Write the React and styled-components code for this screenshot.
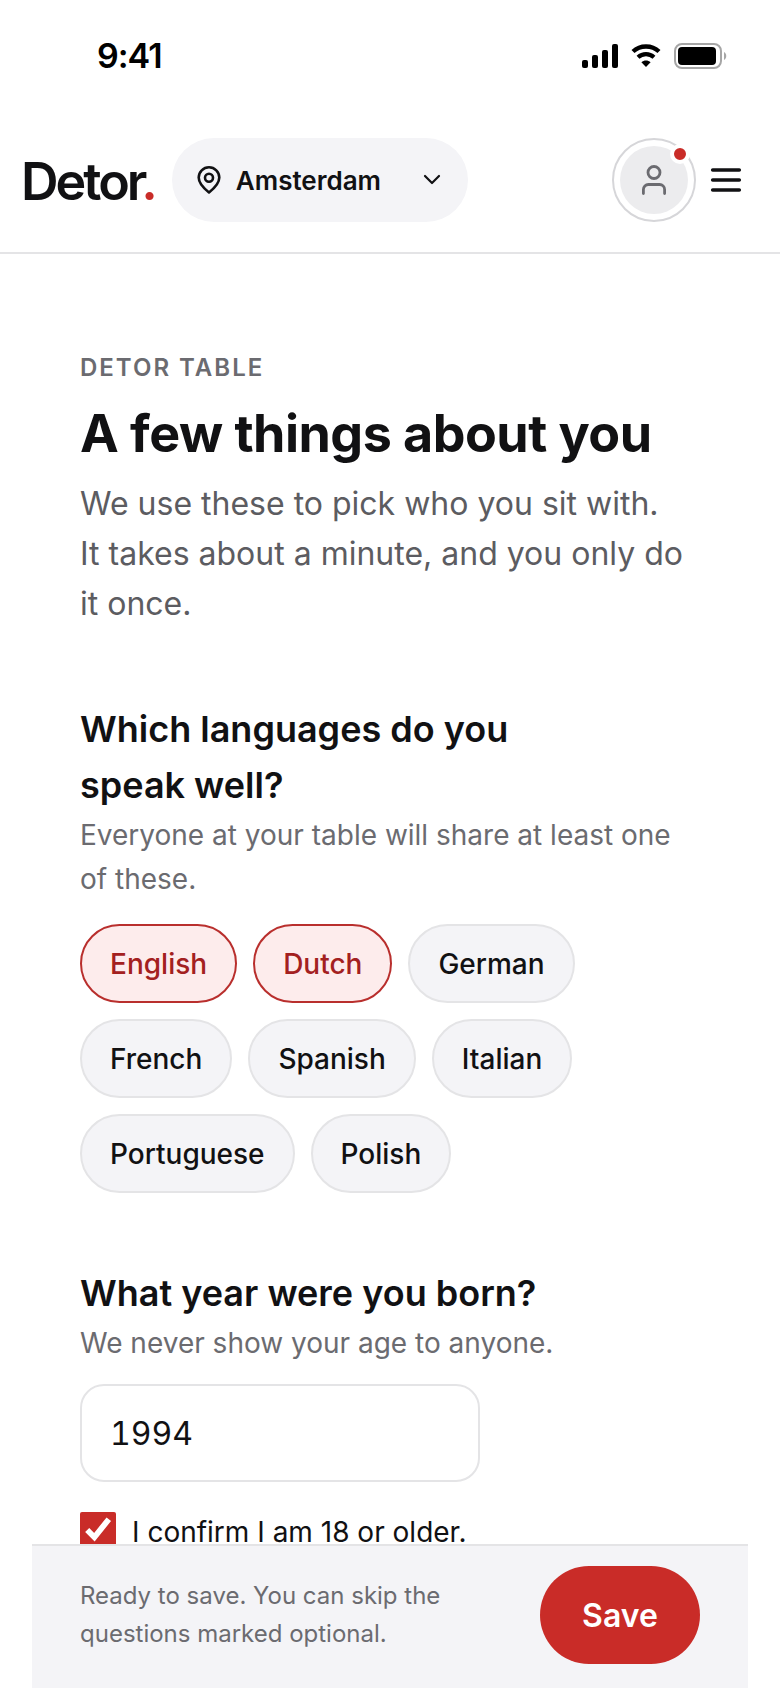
import React, { useState } from 'react'
import styled, { createGlobalStyle } from 'styled-components'

const GlobalStyle = createGlobalStyle`
    *{
        box-sizing: border-box;
    }
    body{
        margin:0;
        background-color: #ffffff;
        color:#111113;
        font-family: Inter, "Liberation Sans", sans-serif;
        font-optical-sizing: none;
    }
    button, input{
        font-family: inherit;
        color:inherit;
        margin:0;
    }
    h1, h2, p{
        margin:0;
    }
`
const Screen = styled.div`
    height:100vh;
    display:flex;
    flex-direction: column;
    overflow: hidden;
`
const StatusBar = styled.div`
    height:108px;
    flex-shrink: 0;
    display:flex;
    align-items: center;
    justify-content: space-between;
    padding:4px 53px 0 97px;
`
const Clock = styled.span`
    font-size:34px;
    line-height: 40px;
    font-weight: 600;
    letter-spacing: -1px;
    color:#000000;
`
const StatusIcons = styled.div`
    display:flex;
    align-items: center;
    gap:13px;
`
const Header = styled.header`
    height:146px;
    flex-shrink: 0;
    display:flex;
    align-items: center;
    padding:0 38px 0 21px;
    border-bottom: 2px solid #e4e4e6;
`
const Logo = styled.a`
    margin-right: 17px;
    padding-top: 4px;
    font-size:52px;
    line-height: 60px;
    font-weight: 600;
    letter-spacing: -3px;
    color:#111113;
    text-decoration: none;
`
const LogoDot = styled.span`
    color:#c92c28;
`
const CityButton = styled.button`
    width:296px;
    height:84px;
    display:flex;
    align-items: center;
    padding:0 26px 0 24px;
    border:none;
    border-radius: 42px;
    background-color: #f4f4f7;
    font-size:26px;
    font-weight: 600;
    cursor:pointer;
`
const CityName = styled.span`
    flex-grow:1;
    margin-left: 14px;
    text-align: left;
`
const HeaderActions = styled.div`
    display:flex;
    align-items: center;
    gap:14px;
    margin-left: auto;
`
const AvatarButton = styled.button`
    position:relative;
    width:84px;
    height:84px;
    padding:6px;
    border:2px solid #d6d6d9;
    border-radius: 50%;
    background-color: white;
    cursor:pointer;
`
const AvatarCircle = styled.span`
    width:68px;
    height:68px;
    display:flex;
    align-items: center;
    justify-content: center;
    border-radius: 50%;
    background-color: #ececee;
`
const NotificationDot = styled.span`
    position:absolute;
    top:4px;
    right:4px;
    width:20px;
    height:20px;
    border:4px solid white;
    border-radius: 50%;
    background-color: #c92c28;
`
const MenuButton = styled.button`
    height:84px;
    display:flex;
    align-items: center;
    padding:0;
    border:none;
    background:none;
    cursor:pointer;
`
const Main = styled.main`
    flex:1;
    min-height: 0;
    overflow-y: auto;
    scrollbar-width: none;
    padding:95px 80px 0;
`
const Eyebrow = styled.p`
    font-size:24px;
    line-height: 38px;
    font-weight: 600;
    letter-spacing: 2px;
    text-transform: uppercase;
    color:#6b6b70;
`
const PageTitle = styled.h1`
    margin-top: 16px;
    font-size:52px;
    line-height: 62px;
    font-weight: 700;
    letter-spacing: -0.01em;
`
const Lead = styled.p`
    max-width: 604px;
    margin-top: 14px;
    font-size:32px;
    line-height: 50px;
    color:#5c5c61;
`
const Question = styled.section`
    margin-top: 72px;
`
const QuestionTitle = styled.h2`
    max-width: 480px;
    font-size:36px;
    line-height: 56px;
    font-weight: 600;
`
const Hint = styled.p`
    font-size:28px;
    line-height: 44px;
    color:#6b6b70;
`
const ChipList = styled.div`
    max-width: 520px;
    display:flex;
    flex-wrap: wrap;
    gap:16px;
    margin-top: 23px;
`
const Chip = styled.button`
    height:79px;
    padding:0 28px;
    border:2px solid ${p => p.$selected ? '#b92f2d' : '#e4e4e6'};
    border-radius: 40px;
    background-color: ${p => p.$selected ? '#fdecec' : '#f4f4f7'};
    color:${p => p.$selected ? '#a32020' : '#111113'};
    font-size:28px;
    font-weight: 500;
    cursor:pointer;
`
const YearInput = styled.input`
    display:block;
    width:400px;
    max-width: 100%;
    height:98px;
    margin-top: 19px;
    padding:0 28px;
    border:2px solid #e4e4e6;
    border-radius: 24px;
    background-color: white;
    font-size:32px;
    font-variant-numeric: tabular-nums;
`
const ConfirmLabel = styled.label`
    display:flex;
    align-items: flex-start;
    gap:16px;
    margin-top: 28px;
    font-size:28px;
    line-height: 44px;
`
const ConfirmBox = styled.input`
    width:36px;
    height:36px;
    margin-top: 2px;
    accent-color: #c92c28;
`
const SaveBar = styled.footer`
    height:144px;
    flex-shrink: 0;
    display:flex;
    align-items: flex-start;
    justify-content: space-between;
    margin:0 32px;
    padding:20px 48px 0;
    border-top: 2px solid #e4e4e6;
    background-color: #f4f4f7;
`
const SaveText = styled.p`
    max-width: 380px;
    padding-top: 11px;
    font-size:24px;
    line-height: 38px;
    color:#6b6b70;
`
const SaveButton = styled.button`
    width:160px;
    height:98px;
    border:none;
    border-radius: 49px;
    background-color: #c92c28;
    color:white;
    font-size:32px;
    font-weight: 600;
    cursor:pointer;
`

// ICONS
const SignalIcon = () => (
    <svg width="36" height="24" viewBox="0 0 36 24" aria-hidden="true">
        <rect x="0" y="16" width="6" height="8" rx="2" />
        <rect x="10" y="11" width="6" height="13" rx="2" />
        <rect x="20" y="6" width="6" height="18" rx="2" />
        <rect x="30" y="0" width="6" height="24" rx="2" />
    </svg>
)
const WifiIcon = () => (
    <svg width="30" height="24" viewBox="0 0 30 24" aria-hidden="true">
        <path d="M2 7.5C9.2 .8 20.8 .8 28 7.5" fill="none" stroke="#000" strokeWidth="4.4" />
        <path d="M7 13.2c4.6-4.2 11.4-4.2 16 0" fill="none" stroke="#000" strokeWidth="4.2" />
        <path d="M15 23l-4.6-4.8c2.6-2.3 6.6-2.3 9.2 0z" />
    </svg>
)
const BatteryIcon = () => (
    <svg width="53" height="26" viewBox="0 0 53 26" aria-hidden="true">
        <rect x="1" y="1" width="46" height="24" rx="7" fill="none" stroke="#a6a6a6" strokeWidth="2" />
        <rect x="4" y="4" width="38" height="18" rx="4" />
        <path d="M50 9v8c3-1.4 3-6.6 0-8z" fill="#a6a6a6" />
    </svg>
)
const PinIcon = () => (
    <svg width="26" height="30" viewBox="0 0 26 30" fill="none" stroke="currentColor" strokeWidth="2.6" strokeLinejoin="round" aria-hidden="true">
        <path d="M13 27.5C7.5 23.2 2.7 18.3 2.7 12.6a10.3 10.3 0 0 1 20.6 0c0 5.7-4.8 10.6-10.3 14.9z" />
        <circle cx="13" cy="12.7" r="4" />
    </svg>
)
const ChevronIcon = () => (
    <svg width="20" height="12" viewBox="0 0 20 12" fill="none" stroke="currentColor" strokeWidth="2.2" strokeLinecap="round" strokeLinejoin="round" aria-hidden="true">
        <path d="M3 2l7 7 7-7" />
    </svg>
)
const UserIcon = () => (
    <svg width="28" height="32" viewBox="0 0 28 32" fill="none" stroke="#6b6b70" strokeWidth="2.8" strokeLinecap="round" aria-hidden="true">
        <circle cx="14" cy="8.5" r="6" />
        <path d="M3.4 29.5v-4a5 5 0 0 1 5-5h11.2a5 5 0 0 1 5 5v4" />
    </svg>
)
const MenuIcon = () => (
    <svg width="32" height="28" viewBox="0 0 32 28" stroke="currentColor" strokeWidth="3.6" strokeLinecap="round" aria-hidden="true">
        <path d="M2.7 4h26.6M2.7 14h26.6M2.7 24h26.6" />
    </svg>
)

const languages = ['English', 'Dutch', 'German', 'French', 'Spanish', 'Italian', 'Portuguese', 'Polish']

function App() {
    const [selected, setSelected] = useState(['English', 'Dutch']);
    const [year, setYear] = useState('1994');
    const [confirmed, setConfirmed] = useState(true);

    const toggle = (name) => {
        setSelected(selected.includes(name) ? selected.filter(n => n !== name) : [...selected, name])
    }

  return (
    <>
    <GlobalStyle />
    <Screen>
        <StatusBar>
            <Clock>9:41</Clock>
            <StatusIcons>
                <SignalIcon />
                <WifiIcon />
                <BatteryIcon />
            </StatusIcons>
        </StatusBar>
        <Header>
            <Logo href="#">Detor<LogoDot>.</LogoDot></Logo>
            <CityButton type="button">
                <PinIcon />
                <CityName>Amsterdam</CityName>
                <ChevronIcon />
            </CityButton>
            <HeaderActions>
                <AvatarButton type="button" aria-label="Account">
                    <AvatarCircle><UserIcon /></AvatarCircle>
                    <NotificationDot />
                </AvatarButton>
                <MenuButton type="button" aria-label="Menu"><MenuIcon /></MenuButton>
            </HeaderActions>
        </Header>

        <Main>
            <Eyebrow>Detor Table</Eyebrow>
            <PageTitle>A few things about you</PageTitle>
            <Lead>We use these to pick who you sit with. It takes about a minute, and you only do it once.</Lead>

            {/* LANGUAGES */}
            <Question>
                <QuestionTitle>Which languages do you speak well?</QuestionTitle>
                <Hint>Everyone at your table will share at least one of these.</Hint>
                <ChipList>
                    {languages.map(name => (
                        <Chip
                            key={name}
                            type="button"
                            aria-pressed={selected.includes(name)}
                            $selected={selected.includes(name)}
                            onClick={() => toggle(name)}
                        >
                            {name}
                        </Chip>
                    ))}
                </ChipList>
            </Question>

            {/* BIRTH YEAR */}
            <Question>
                <QuestionTitle><label htmlFor="birth-year">What year were you born?</label></QuestionTitle>
                <Hint>We never show your age to anyone.</Hint>
                <YearInput id="birth-year" inputMode="numeric" value={year} onChange={e => setYear(e.target.value)} />
                <ConfirmLabel>
                    <ConfirmBox type="checkbox" checked={confirmed} onChange={e => setConfirmed(e.target.checked)} />
                    I confirm I am 18 or older.
                </ConfirmLabel>
            </Question>
        </Main>

        <SaveBar>
            <SaveText>Ready to save. You can skip the questions marked optional.</SaveText>
            <SaveButton type="button">Save</SaveButton>
        </SaveBar>
    </Screen>
    </>
  )
}

export default App
